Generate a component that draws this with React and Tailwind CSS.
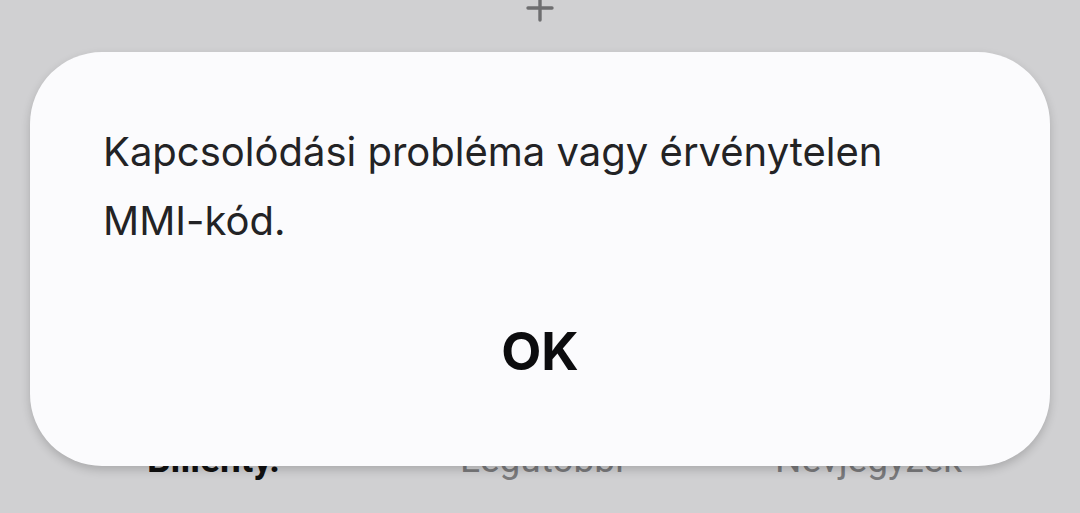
import React from "react";

export default function App() {
  return (
    <div
      className="relative w-[1080px] h-[513px] overflow-hidden bg-[#d0d0d2]"
      style={{ fontFamily: "Roboto, 'Noto Sans', sans-serif" }}
    >
      {/* background content */}
      <div className="flex justify-center h-[52px]">
        <svg width="28" height="28" viewBox="0 0 28 28" className="-mt-[5px]">
          <path d="M14 1 V25 M2 13 H26" stroke="#6e6e70" strokeWidth="3.4" strokeLinecap="round" fill="none" />
        </svg>
      </div>
      <div className="flex items-start pt-[386px] text-[37px] leading-[44px]">
        <div className="w-[360px] pl-[147px] font-bold text-[#111]">Billenty.</div>
        <div className="w-[300px] pl-[100px] text-[#7a7a7c]">Legutóbbi</div>
        <div className="pl-[115px] text-[#7a7a7c]">Névjegyzék</div>
      </div>

      {/* dialog */}
      <div className="absolute left-[30px] top-[52px] w-[1020px] h-[414px] rounded-[72px] bg-[#fbfbfd] shadow-[0_4px_10px_rgba(0,0,0,0.18)] flex flex-col">
        <div
          className="pl-[73px] pr-[30px] pt-[65px] text-[40px] leading-[69px] text-[#232325]"
          style={{ fontFamily: "Inter, 'Noto Sans', sans-serif" }}
        >
          Kapcsolódási probléma vagy érvénytelen
          <br />
          MMI-kód.
        </div>
        <div className="flex justify-center pt-[71px]">
          <span
            className="text-[52px] leading-none font-bold text-[#0c0c0e]"
            style={{ fontFamily: "Inter, 'Noto Sans', sans-serif" }}
          >
            OK
          </span>
        </div>
      </div>
    </div>
  );
}
